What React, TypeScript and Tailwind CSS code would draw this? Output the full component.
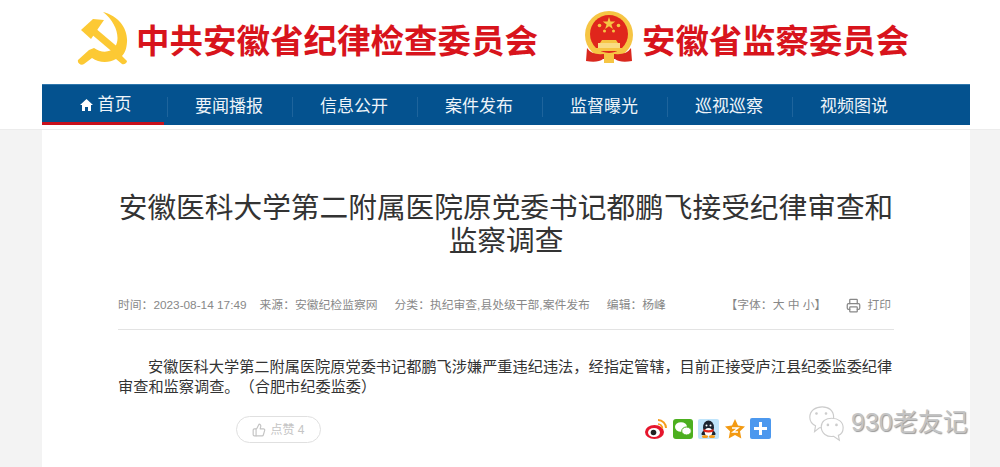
import React from "react";
import { Printer, ThumbsUp } from "lucide-react";

const navItems = ["要闻播报", "信息公开", "案件发布", "监督曝光", "巡视巡察", "视频图说"];
const cjk = "font-['Liberation_Sans','Noto_Sans_CJK_SC',sans-serif]";

function PartyEmblem() {
  return (
    <svg width="54" height="54" viewBox="0 0 54 54" fill="#fcc934">
      <path d="M28 1 C44 5 53 18 52 31 C51.500 38 50 42 47 45 L52 50 C52 52 49 54 47 53 L41 48 C34 52 24 52 17 47 L9 53 C6 55 2 52 3 49 L14 39 L19 37 C26 42 35 42 40 36 C46 27 41 11 28 1 Z" />
      <path d="M6 19 L18 8 L29 9 L16 28 Z" />
      <path d="M17 19 L43 41" stroke="#fcc934" strokeWidth="7" />
    </svg>
  );
}

function StateEmblem() {
  return (
    <svg width="50" height="52" viewBox="0 0 50 52">
      <circle cx="25" cy="24" r="24" fill="#f6c544" />
      <circle cx="25" cy="23" r="19" fill="#e0261c" />
      <path d="M25 6 l1.500 4.500 h4.800 l-3.900 2.900 1.500 4.600 -3.900-2.800 -3.900 2.800 1.500-4.600 -3.900-2.900 h4.800 z" fill="#f6c544" />
      <circle cx="15.500" cy="14.500" r="1.800" fill="#f6c544" />
      <circle cx="34.500" cy="14.500" r="1.800" fill="#f6c544" />
      <circle cx="20.500" cy="20" r="1.500" fill="#f6c544" />
      <circle cx="29.500" cy="20" r="1.500" fill="#f6c544" />
      <path d="M18 29 h14 l2 3 h-18 z" fill="#f6c544" />
      <rect x="14" y="32" width="22" height="5" fill="#f9dc85" />
      <rect x="10" y="37" width="30" height="3" fill="#f6c544" />
      <path d="M3 37 Q9 46 25 42 Q41 46 47 37 L48 50 Q36 52 31 48 H19 Q14 52 2 50 Z" fill="#d9281e" />
      <rect x="20" y="42" width="10" height="10" fill="#f6c544" />
    </svg>
  );
}

function WeiboIcon() {
  return (
    <svg width="22" height="22" viewBox="0 0 22 22">
      <ellipse cx="9.500" cy="14" rx="9.500" ry="7" fill="#e6162d" />
      <ellipse cx="9" cy="14.500" rx="6" ry="4.500" fill="#fff" />
      <circle cx="8.500" cy="14.500" r="2.800" fill="#222" />
      <path d="M13 2 A8 8 0 0 1 21 10" stroke="#f59c1a" strokeWidth="2" fill="none" />
      <path d="M13 6 A4.500 4.500 0 0 1 17.500 10.500" stroke="#f59c1a" strokeWidth="1.600" fill="none" />
    </svg>
  );
}

function WechatIcon() {
  return (
    <svg width="20" height="20" viewBox="0 0 20 20">
      <rect width="20" height="20" rx="3" fill="#4caf1f" />
      <ellipse cx="8" cy="8" rx="6" ry="4.800" fill="#fff" />
      <ellipse cx="13.500" cy="12" rx="4.800" ry="4" fill="#fff" stroke="#4caf1f" />
    </svg>
  );
}

function QQIcon() {
  return (
    <svg width="21" height="20" viewBox="0 0 21 20">
      <rect width="21" height="20" rx="2" fill="#bfe4fb" />
      <ellipse cx="10.500" cy="8.500" rx="5.500" ry="7" fill="#1c2430" />
      <path d="M5 12 Q2.500 15 4 16 L17 16 Q18.500 15 16 12 Z" fill="#1c2430" />
      <ellipse cx="10.500" cy="13" rx="3.800" ry="4" fill="#fff" />
      <path d="M5.500 10 Q10.500 12.500 15.500 10 L15.500 12.500 Q10.500 14.500 5.500 12.500 Z" fill="#e0261c" />
      <circle cx="8.500" cy="6.500" r="1" fill="#fff" />
      <circle cx="12.500" cy="6.500" r="1" fill="#fff" />
      <ellipse cx="7" cy="17.500" rx="3" ry="1.500" fill="#f59c1a" />
      <ellipse cx="14" cy="17.500" rx="3" ry="1.500" fill="#f59c1a" />
    </svg>
  );
}

function QzoneIcon() {
  return (
    <svg width="20" height="20" viewBox="0 0 20 20">
      <path d="M10 0 L13 6.600 L20 7.400 L15 12.200 L16.300 19.500 L10 16 L3.700 19.500 L5 12.200 L0 7.400 L7 6.600 Z" fill="#f39a12" />
      <path d="M7 9 h6 l-5 4 h5" stroke="#fff" strokeWidth="1.400" fill="none" />
    </svg>
  );
}

function PlusIcon() {
  return (
    <svg width="21" height="21" viewBox="0 0 21 21">
      <rect width="21" height="21" rx="2" fill="#4c98ee" />
      <path d="M10.500 4 v13 M4 10.500 h13" stroke="#fff" strokeWidth="3" />
    </svg>
  );
}

export default function App() {
  return (
    <div className={`relative h-[467px] w-[1000px] overflow-hidden bg-[#f3f3f3] [text-spacing-trim:space-all] ${cjk}`}>
      {/* top banner and nav */}
      <header className="h-[130px] border-b border-[#ececec] bg-white">
        <div className="flex h-[84px] items-start pl-[75px] pt-[11px]">
          <PartyEmblem />
          <span className="ml-[7px] mt-[14px] text-[33.5px] font-bold leading-none text-[#d8141c]">中共安徽省纪律检查委员会</span>
          <div className="ml-[46px]">
            <StateEmblem />
          </div>
          <span className="ml-[8px] mt-[14px] text-[33.4px] font-bold leading-none text-[#d8141c]">安徽省监察委员会</span>
        </div>
        <nav className="ml-[42px] flex h-[41px] w-[928px] border-t border-[#2f77ad] bg-[#04528f] text-[17px] text-[#eef4f9]">
          <a className="flex w-[125px] items-center justify-center gap-[5px] border-b-[3px] border-[#c8101c] pl-[2px] pt-[2px] [border-image:linear-gradient(to_right,#c8101c_97%,transparent_97%)_1]">
            <svg width="13" height="12" viewBox="0 0 13 12" fill="#fff">
              <path d="M6.500 0 L13 6 L11 6 L11 12 L8 12 L8 8 L5 8 L5 12 L2 12 L2 6 L0 6 Z" />
            </svg>
            首页
          </a>
          {navItems.map((item) => (
            <a key={item} className="flex w-[125px] items-center justify-center pr-[2px] pt-1">
              <span className="h-5 w-px -translate-x-[27px] bg-[#1e649c]" />
              {item}
            </a>
          ))}
        </nav>
      </header>

      {/* article */}
      <main className="ml-[42px] h-[337px] w-[928px] bg-white px-[76px] pt-[62px]">
        <h1 className="text-center text-[28.7px] leading-[33px] text-[#333]">
          安徽医科大学第二附属医院原党委书记都鹏飞接受纪律审查和监察调查
        </h1>
        <div className="mt-[37px] flex h-[35px] items-start border-b border-[#e3e3e3] text-[11.8px] leading-5 text-[#888]">
          <span>时间：2023-08-14 17:49</span>
          <span className="ml-[13px]">来源：安徽纪检监察网</span>
          <span className="ml-[17px]">分类：执纪审查,县处级干部,案件发布</span>
          <span className="ml-[17px]">编辑：杨峰</span>
          <span className="ml-auto">【字体：大 中 小】</span>
          <span className="ml-[20px] mr-[3px] flex items-center gap-[6px]">
            <Printer size={15} />
            打印
          </span>
        </div>
        <p className="mt-[27px] indent-[30px] text-[15.2px] leading-[20px] text-[#333]">
          安徽医科大学第二附属医院原党委书记都鹏飞涉嫌严重违纪违法，经指定管辖，目前正接受庐江县纪委监委纪律审查和监察调查。（合肥市纪委监委）
        </p>
        <div className="mt-[19px] flex items-center">
          <button className="ml-[118px] flex h-[27px] w-[85px] items-center justify-center gap-1 rounded-full border border-[#e0e0e0] text-[12px] text-[#c4c4c4]">
            <ThumbsUp size={14} />
            点赞 4
          </button>
          <div className="ml-[324px] flex items-center gap-[5.5px] pb-[2px]">
            <WeiboIcon />
            <WechatIcon />
            <QQIcon />
            <QzoneIcon />
            <PlusIcon />
          </div>
        </div>
      </main>

      {/* watermark over the page */}
      <div className="absolute left-[806px] top-[404px] flex items-center gap-[5px] text-[25px] text-[#c4c4c4] [text-shadow:1px_1px_1px_#999]">
        <svg width="40" height="38" viewBox="0 0 42 38" fill="#fff" stroke="#ccc" strokeWidth="1.200">
          <path d="M4 13 C4 6 10 2 17 2 C24 2 29 6 29 13 C29 20 23 24 14 24 L9 28 L10 22 C6 20 4 17 4 13 Z" />
          <path d="M16 23 C16 17 21 14 27 14 C34 14 39 18 39 24 C39 28 37 31 34 32 L35 37 L29 33 C22 34 16 30 16 23 Z" />
          <circle cx="11" cy="9" r="0.800" fill="#ccc" />
          <circle cx="21" cy="9" r="0.800" fill="#ccc" />
          <circle cx="23" cy="21" r="0.800" fill="#ccc" />
          <circle cx="32" cy="21" r="0.800" fill="#ccc" />
        </svg>
        <span>930老友记</span>
      </div>
    </div>
  );
}
